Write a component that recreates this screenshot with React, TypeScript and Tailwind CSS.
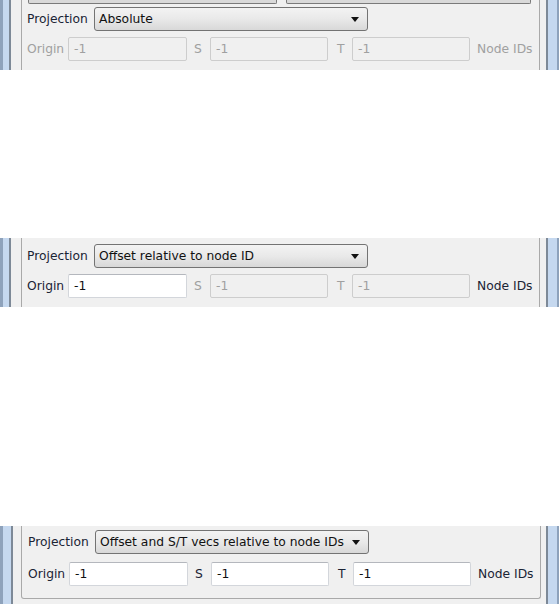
const FONT = "font-['DejaVu_Sans',sans-serif] text-[12.3px]"

type Mode = 'absolute' | 'offset' | 'vecs'

const OPTIONS: Record<Mode, string> = {
  absolute: 'Absolute',
  offset: 'Offset relative to node ID',
  vecs: 'Offset and S/T vecs relative to node IDs',
}

function Label({ text, on, className = '' }: { text: string; on: boolean; className?: string }) {
  return <span className={`${on ? 'text-[#1b2435]' : 'text-[#a0a0a0]'} ${className}`}>{text}</span>
}

function Field({ on, w = 'w-[118px]' }: { on: boolean; w?: string }) {
  return (
    <div
      className={`${w} h-[24px] flex items-center pl-[5px] rounded-[2px] border ${
        on ? 'bg-white border-[#d3d6db] border-t-[#b4b7bd] text-[#111]' : 'bg-[#f0f0f0] border-[#cdcdcd] text-[#a0a0a0]'
      }`}
    >
      -1
    </div>
  )
}

function Combo({ mode }: { mode: Mode }) {
  return (
    <div className="w-[274px] h-[24px] flex items-center justify-between pl-[4px] pr-[8px] rounded-[3px] border border-[#737373] bg-gradient-to-b from-[#f3f3f3] via-[#e9e9e9] to-[#d8d8d8] text-[#111]">
      <span>{OPTIONS[mode]}</span>
      <svg width="8" height="5" viewBox="0 0 8 5">
        <path d="M0 0H8L4 5Z" fill="#111" />
      </svg>
    </div>
  )
}

function Panel({ mode, h, pt, gap, stub = false, closed = false, shift = 0 }: {
  mode: Mode; h: string; pt: string; gap: string; stub?: boolean; closed?: boolean; shift?: number
}) {
  const origin = mode !== 'absolute'
  const st = mode === 'vecs'
  return (
    <div className={`flex ${h} ${FONT} bg-[#f0f0f0]`}>
      <div className="flex">
        <div className="w-[3px] bg-[#8ea2bb]" />
        <div className={shift ? 'w-[8px] bg-[#c5d8ef]' : 'w-[6px] bg-[#c5d8ef]'} />
        <div className="w-[2px] bg-[#7d8997]" />
      </div>
      <div className={`flex-1 flex flex-col ${closed ? 'pb-[5px]' : ''} ${shift ? 'pl-[8px] pr-[5px]' : 'pl-[10px] pr-[6px]'}`}>
        <div className={`flex-1 border-l border-r border-[#a9a9a9] ${closed ? 'border-b rounded-b-[3px]' : ''} ${pt} ${shift ? 'pl-[6px]' : 'pl-[5px]'}`}>
          {stub && (
            <div className="flex gap-[9px] pl-[1px] mb-[3px]">
              <div className="w-[249px] h-[4px] bg-[#d9d9d9] border-x border-b border-[#7a7a7a] rounded-b-[2px]" />
              <div className="w-[245px] h-[4px] bg-[#d9d9d9] border-x border-b border-[#7a7a7a] rounded-b-[2px]" />
            </div>
          )}
          <div className="flex items-center">
            <Label text="Projection" on className="w-[67px]" />
            <Combo mode={mode} />
          </div>
          <div className={`flex items-center ${gap}`}>
            <Label text="Origin" on={origin} className="w-[41px]" />
            <Field on={origin} w="w-[119px]" />
            <Label text="S" on={st} className="w-[16px] ml-[7px]" />
            <Field on={st} />
            <Label text="T" on={st} className="w-[15px] ml-[9px]" />
            <Field on={st} />
            <Label text="Node IDs" on={origin} className="ml-[7px]" />
          </div>
        </div>
      </div>
      <div className="flex">
        <div className="w-[2px] bg-[#7d8997]" />
        <div className="w-[9px] bg-[#c5d8ef]" />
        <div className="w-[2px] bg-[#8ea2bb]" />
      </div>
    </div>
  )
}

export default function App() {
  return (
    <div className="w-[559px] h-[604px] bg-white flex flex-col">
      <Panel mode="absolute" h="h-[70px]" pt="pt-0" gap="mt-[6px]" stub />
      <div className="h-[168px]" />
      <Panel mode="offset" h="h-[69px]" pt="pt-[6px]" gap="mt-[6px]" />
      <div className="h-[219px]" />
      <Panel mode="vecs" h="h-[78px]" pt="pt-[4px]" gap="mt-[8px]" closed shift={1} />
    </div>
  )
}
